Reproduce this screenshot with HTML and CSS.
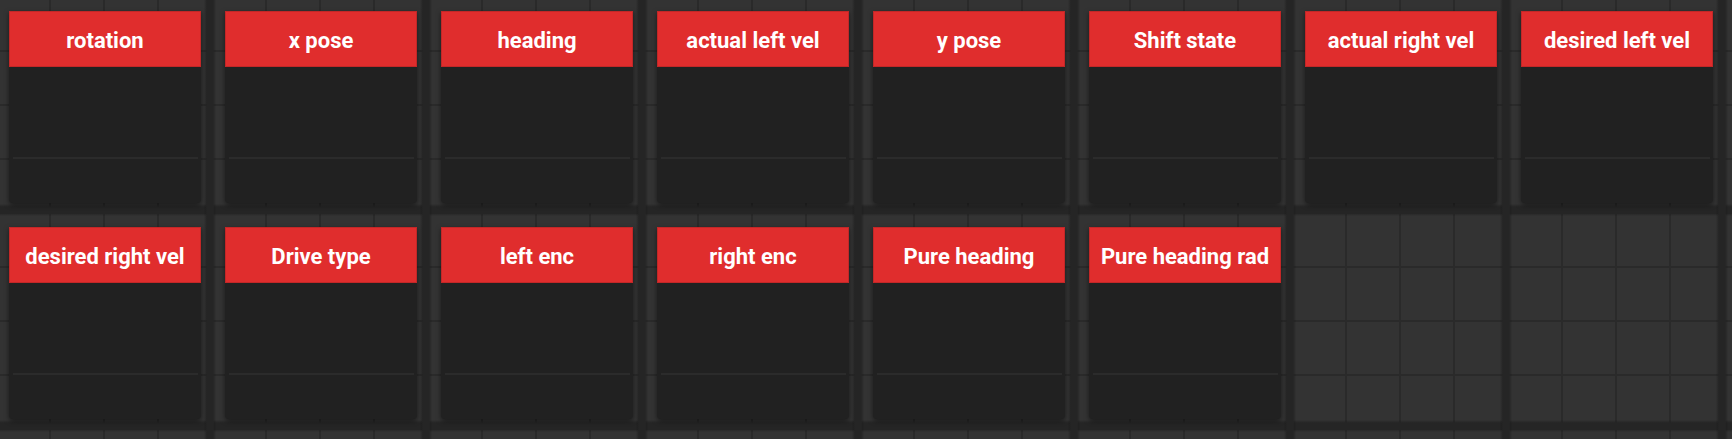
FILE: index.html
```html
<!DOCTYPE html>
<html>
<head>
<meta charset="utf-8">
<link rel="stylesheet" href="styles.css">
</head>
<body>
<div class="board">
  <div class="tile"><div class="title">rotation</div><div class="body"><div class="rule"></div></div></div>
  <div class="tile"><div class="title">x pose</div><div class="body"><div class="rule"></div></div></div>
  <div class="tile"><div class="title">heading</div><div class="body"><div class="rule"></div></div></div>
  <div class="tile"><div class="title">actual left vel</div><div class="body"><div class="rule"></div></div></div>
  <div class="tile"><div class="title">y pose</div><div class="body"><div class="rule"></div></div></div>
  <div class="tile"><div class="title">Shift state</div><div class="body"><div class="rule"></div></div></div>
  <div class="tile"><div class="title">actual right vel</div><div class="body"><div class="rule"></div></div></div>
  <div class="tile"><div class="title">desired left vel</div><div class="body"><div class="rule"></div></div></div>
  <div class="tile"><div class="title">desired right vel</div><div class="body"><div class="rule"></div></div></div>
  <div class="tile"><div class="title">Drive type</div><div class="body"><div class="rule"></div></div></div>
  <div class="tile"><div class="title">left enc</div><div class="body"><div class="rule"></div></div></div>
  <div class="tile"><div class="title">right enc</div><div class="body"><div class="rule"></div></div></div>
  <div class="tile"><div class="title">Pure heading</div><div class="body"><div class="rule"></div></div></div>
  <div class="tile"><div class="title">Pure heading rad</div><div class="body"><div class="rule"></div></div></div>
</div>
</body>
</html>
```

FILE: styles.css
```css
html, body {
  margin: 0;
  padding: 0;
  width: 1732px;
  height: 439px;
  overflow: hidden;
}

body {
  background-color: #333333;
  background-image:
    linear-gradient(to right, transparent 204px, rgba(0,0,0,0.12) 205px, #252525 207px, #252525 213px, rgba(0,0,0,0.12) 215px, transparent 216px),
    linear-gradient(to bottom, transparent 204px, rgba(0,0,0,0.12) 205px, #252525 207px, #252525 213px, rgba(0,0,0,0.12) 215px, transparent 216px),
    linear-gradient(to right, transparent 49px, #2a2a2a 49px, #2a2a2a 51px, transparent 51px),
    linear-gradient(to bottom, transparent 50px, #2a2a2a 50px, #2a2a2a 52px, transparent 52px);
  background-size: 216px 216px, 216px 216px, 54px 54px, 54px 54px;
  font-family: Roboto, "Liberation Sans", sans-serif;
}

.board {
  display: grid;
  grid-template-columns: repeat(8, 216px);
  grid-auto-rows: 216px;
}

.tile {
  margin: 11px 0 0 9px;
  width: 192px;
  height: 192px;
  display: flex;
  flex-direction: column;
  background: #212121;
  border-radius: 0 0 4px 4px;
  box-shadow: 0 2px 5px rgba(0, 0, 0, 0.5);
}

.title {
  height: 56px;
  box-sizing: border-box;
  padding-top: 3px;
  background: #e02d2d;
  border: 1px solid #c32727;
  color: #ffffff;
  font-weight: 700;
  font-size: 22px;
  display: flex;
  align-items: center;
  justify-content: center;
  white-space: nowrap;
}

.body {
  flex: 1;
  padding: 90px 3px 0 4px;
}

.rule {
  height: 2px;
  background: #2b2b2b;
}
```
